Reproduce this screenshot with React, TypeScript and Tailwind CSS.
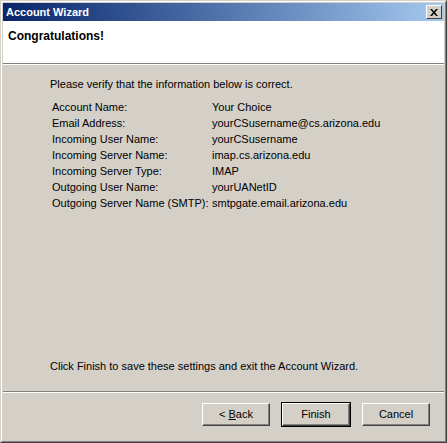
const rows: [string, string][] = [
  ["Account Name:", "Your Choice"],
  ["Email Address:", "yourCSusername@cs.arizona.edu"],
  ["Incoming User Name:", "yourCSusername"],
  ["Incoming Server Name:", "imap.cs.arizona.edu"],
  ["Incoming Server Type:", "IMAP"],
  ["Outgoing User Name:", "yourUANetID"],
  ["Outgoing Server Name (SMTP):", "smtpgate.email.arizona.edu"],
];

const WinButton = ({ children, isDefault }: { children: React.ReactNode; isDefault?: boolean }) => (
  <div className={isDefault ? "border border-black" : "border border-transparent"}>
    <div className="w-[68px] h-[23px] bg-[#d4d0c8] border border-t-white border-l-white border-r-[#404040] border-b-[#404040] shadow-[inset_-1px_-1px_0_#808080] flex items-center justify-center text-[11px] text-black">
      <span>{children}</span>
    </div>
  </div>
);

export default function App() {
  return (
    <div className="w-[447px] h-[443px] bg-[#d4d0c8] border border-t-[#d4d0c8] border-l-[#d4d0c8] border-r-[#404040] border-b-[#404040] font-['Liberation_Sans',Arial,sans-serif] flex flex-col">
      <div className="flex flex-col flex-1 border border-t-white border-l-white border-r-[#808080] border-b-[#808080] p-px">
        {/* title bar */}
        <div className="h-[18px] bg-gradient-to-r from-[#0a246a] to-[#a6caf0] flex items-center justify-between pl-[3px] pr-[2px]">
          <span className="text-white font-bold text-[11px]">Account Wizard</span>
          <div className="w-[16px] h-[14px] bg-[#d4d0c8] border border-t-white border-l-white border-r-[#404040] border-b-[#404040] flex items-center justify-center">
            <svg width="8" height="7" viewBox="0 0 8 7">
              <path d="M0 0h2l2 2.5L6 0h2L5 3.5 8 7H6L4 4.5 2 7H0l3-3.5z" fill="black" />
            </svg>
          </div>
        </div>

        {/* header */}
        <div className="bg-white h-[43px] pl-[5px] pt-[6px] border-b border-[#808080]">
          <div className="font-bold text-[12px] text-black">Congratulations!</div>
        </div>
        <div className="h-px bg-white" />

        {/* body */}
        <div className="flex-1 flex flex-col pl-[47px] pt-[11px] text-[11px] text-black">
          <div className="leading-[16px]">Please verify that the information below is correct.</div>
          <div className="mt-[7px] pl-[2px]">
            {rows.map(([k, v]) => (
              <div key={k} className="flex leading-[16px]">
                <div className="w-[160px]">{k}</div>
                <div>{v}</div>
              </div>
            ))}
          </div>
          <div className="flex-1" />
          <div className="leading-[16px] mb-[17px]">Click Finish to save these settings and exit the Account Wizard.</div>
        </div>

        {/* footer */}
        <div className="h-px bg-[#808080]" />
        <div className="h-px bg-white" />
        <div className="h-[47px] flex justify-end items-start pt-[9px] pr-[13px] gap-[10px]">
          <WinButton>
            &lt; <span className="underline">B</span>ack
          </WinButton>
          <WinButton isDefault>Finish</WinButton>
          <WinButton>Cancel</WinButton>
        </div>
      </div>
    </div>
  );
}
